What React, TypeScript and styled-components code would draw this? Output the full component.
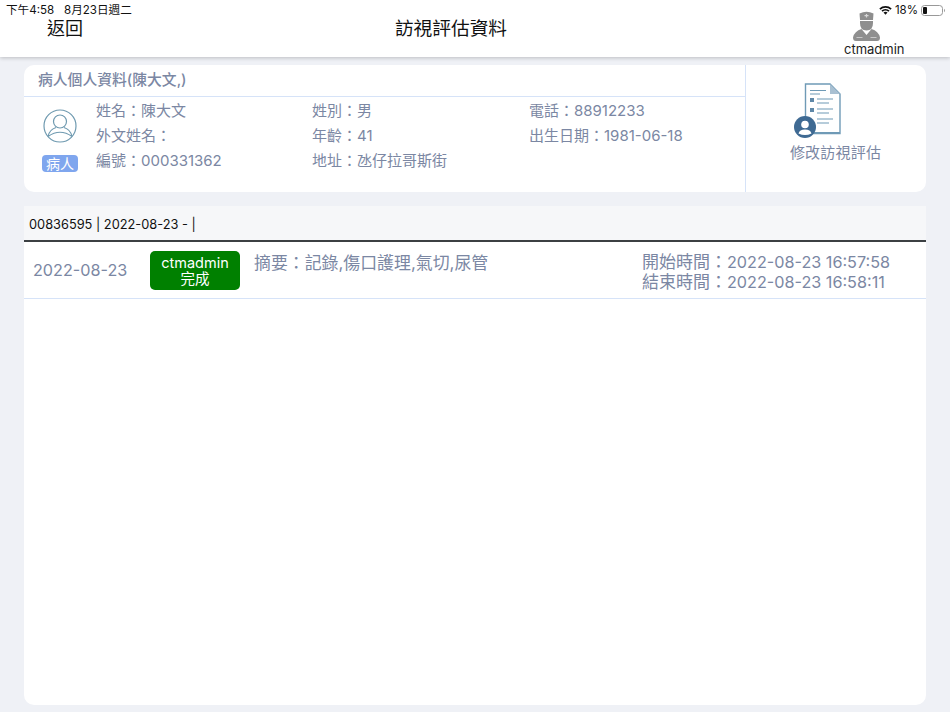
import styled, { createGlobalStyle } from "styled-components";

const GlobalStyle = createGlobalStyle`
    html, body {
        margin: 0;
        padding: 0;
        background-color: #eff1f6;
        font-family: Inter, "Noto Sans CJK TC", sans-serif;
    }
`;

const Page = styled.div`
    width: 950px;
    height: 712px;
    overflow: hidden;
    display: flex;
    flex-direction: column;
    background-color: #eff1f6;
`;

const Header = styled.header`
    position: relative;
    height: 57px;
    flex-shrink: 0;
    background-color: #fff;
    box-shadow: 0 1px 4px rgba(0, 0, 0, 0.22);
    display: grid;
    grid-template-columns: 47px 1fr 1fr 106px;
`;

const StatusLeft = styled.div`
    position: absolute;
    top: 3px;
    left: 6px;
    font-size: 11.6px;
    line-height: 14px;
    color: #111;
    white-space: pre;
`;

const StatusRight = styled.div`
    position: absolute;
    top: 3px;
    right: 5px;
    display: flex;
    align-items: center;
    gap: 3px;
    font-size: 11.5px;
    line-height: 14px;
    color: #111;
`;

const BackLink = styled.div`
    grid-column: 2;
    padding-top: 17px;
    font-size: 18px;
    line-height: 24px;
    color: #111;
`;

const Title = styled.h1`
    position: absolute;
    top: 17px;
    left: 0;
    width: 902px;
    margin: 0;
    text-align: center;
    font-size: 18.7px;
    font-weight: 400;
    line-height: 24px;
    color: #111;
`;

const UserBox = styled.div`
    grid-column: 4;
    padding-top: 11px;
    display: flex;
    flex-direction: column;
    align-items: flex-start;

    svg {
        margin-left: 9px;
    }
`;

const UserName = styled.div`
    margin-top: 1px;
    font-size: 13px;
    line-height: 15px;
    color: #222;
`;

const Content = styled.main`
    flex: 1;
    display: flex;
    flex-direction: column;
    gap: 14px;
    padding: 8px 24px 7px;
`;

const PatientCard = styled.section`
    height: 127px;
    flex-shrink: 0;
    display: flex;
    background-color: #fff;
    border-radius: 10px;
    overflow: hidden;
`;

const PatientMain = styled.div`
    flex: 1;
    display: flex;
    flex-direction: column;
`;

const CardTitle = styled.div`
    height: 31px;
    padding-left: 14px;
    border-bottom: 1px solid #d6e3f8;
    font-size: 14.8px;
    font-weight: 500;
    line-height: 30px;
    color: #7b87a3;
`;

const PatientBody = styled.div`
    flex: 1;
    display: flex;
`;

const AvatarColumn = styled.div`
    width: 72px;
    padding-top: 12px;
    display: flex;
    flex-direction: column;
    align-items: center;
`;

const RoleBadge = styled.span`
    width: 36px;
    height: 17px;
    margin-top: 12px;
    border-radius: 4px;
    background-color: #7fa6ee;
    color: #fff;
    font-size: 14px;
    line-height: 17px;
    text-align: center;
`;

const InfoGrid = styled.div`
    display: grid;
    grid-template-columns: 216px 217px 216px;
    grid-auto-rows: 25px;
    padding-top: 1px;
`;

const InfoCell = styled.div`
    font-size: 15px;
    line-height: 25px;
    color: #7b87a3;
    white-space: nowrap;
`;

const EditAction = styled.div`
    width: 181px;
    flex-shrink: 0;
    border-left: 1px solid #d6e3f8;
    padding-top: 18px;
    display: flex;
    flex-direction: column;
    align-items: center;

    svg {
        margin-right: 40px;
    }
`;

const EditLabel = styled.div`
    margin: 4px 2px 0 0;
    font-size: 15px;
    line-height: 20px;
    letter-spacing: 0.2px;
    color: #7b87a3;
`;

const VisitPanel = styled.section`
    flex: 1;
    display: flex;
    flex-direction: column;
    background-color: #fff;
    border-radius: 0 0 10px 10px;
`;

const VisitHeading = styled.div`
    height: 34px;
    padding-left: 5px;
    background-color: #f6f7f9;
    border-bottom: 2px solid #3c4043;
    font-size: 12.8px;
    line-height: 37px;
    color: #111;
`;

const VisitRow = styled.div`
    height: 56px;
    display: flex;
    border-bottom: 1px solid #d6e3f8;
`;

const VisitDate = styled.div`
    width: 126px;
    padding: 18px 0 0 9px;
    box-sizing: border-box;
    font-size: 16.2px;
    line-height: 20px;
    color: #7b87a3;
`;

const StatusBadge = styled.div`
    width: 90px;
    height: 39px;
    margin-top: 9px;
    border-radius: 5px;
    background-color: #008000;
    color: #fff;
    font-size: 14.5px;
    line-height: 16px;
    text-align: center;
    padding-top: 4px;
    box-sizing: border-box;
`;

const Summary = styled.div`
    width: 402px;
    padding: 10px 0 0 14px;
    box-sizing: border-box;
    font-size: 16.9px;
    line-height: 22px;
    color: #7b87a3;
`;

const Times = styled.div`
    padding-top: 10px;
    font-size: 17px;
    line-height: 20px;
    color: #7b87a3;
    white-space: nowrap;
`;

const TimeValue = styled.span`
    font-size: 16.2px;
`;

function WifiIcon() {
    return (
        <svg width="13" height="10" viewBox="0 0 13 10">
            <path d="M0.3 3.4 A9 9 0 0 1 12.7 3.4 L11.5 4.7 A7.2 7.2 0 0 0 1.5 4.7 Z" fill="#111" />
            <path d="M2.4 5.5 A6 6 0 0 1 10.6 5.5 L9.4 6.8 A4.2 4.2 0 0 0 3.6 6.8 Z" fill="#111" />
            <path d="M4.5 7.6 A3 3 0 0 1 8.5 7.6 L6.5 9.8 Z" fill="#111" />
        </svg>
    );
}

function BatteryIcon() {
    return (
        <svg width="24" height="11" viewBox="0 0 24 11">
            <rect x="0.5" y="0.5" width="21" height="10" rx="3" fill="none" stroke="#999" />
            <rect x="2" y="2" width="4" height="7" rx="1" fill="#111" />
            <path d="M23 3.8 A2 2 0 0 1 23 7.2 Z" fill="#999" />
        </svg>
    );
}

function NurseIcon() {
    return (
        <svg width="27" height="30" viewBox="0 0 27 30">
            <path d="M6.5 2.5 Q13.5 -0.8 20.5 2.5 L20 9 H7 Z" fill="#8e8e8e" />
            <path d="M11.5 4.7 h4 M13.5 3 v3.4" stroke="#d8d8d8" strokeWidth="1.2" />
            <path d="M7 10 H20 V12 Q20 19.5 13.5 19.5 Q7 19.5 7 12 Z" fill="#8f8f8f" />
            <path d="M8.5 18 L13.5 24 L18.5 18 Q25.5 20 27 26.5 Q27 30 24 30 H3 Q0 30 0 26.5 Q1.5 20 8.5 18 Z" fill="#8f8f8f" />
            <path d="M3.5 26.5 H9.5 M17.5 26.5 H23.5" stroke="#c8c8c8" strokeWidth="1.2" />
        </svg>
    );
}

function PersonCircleIcon() {
    return (
        <svg width="34" height="34" viewBox="0 0 34 34" fill="none" stroke="#6f9ab0" strokeWidth="1.2">
            <circle cx="17" cy="17" r="16" />
            <circle cx="17" cy="12.5" r="6.5" />
            <path d="M5 27.5 Q6.5 20.5 13 18.5 M29 27.5 Q27.5 20.5 21 18.5 M5 27.5 Q17 19 29 27.5" />
        </svg>
    );
}

function ReportIcon() {
    return (
        <svg width="48" height="56" viewBox="0 0 48 56">
            <path d="M12.5 1 H37 L47 11 V50.5 H12.5 Z" fill="#fff" stroke="#6f9ab6" strokeWidth="1.4" />
            <path d="M37 1 L47 11 H37 Z" fill="#a9c0d2" />
            <rect x="12.5" y="49" width="34.5" height="2" fill="#6f9ab6" />
            <path d="M17 7.5 H33 M17 11 H27 M24 16 H40 M24 20 H36 M24 26 H40 M24 30 H36 M24 36 H40 M24 40 H36" stroke="#6f9ab6" strokeWidth="1.2" />
            <rect x="17" y="15" width="4" height="4" fill="#5f88a8" />
            <rect x="17" y="25" width="4" height="4" fill="#5f88a8" />
            <circle cx="12" cy="44" r="11" fill="#3f6a93" />
            <circle cx="12" cy="41.5" r="3.8" fill="#fff" />
            <path d="M5.5 50.5 Q6.5 46.5 12 46.5 Q17.5 46.5 18.5 50.5 Q12 53.5 5.5 50.5 Z" fill="#fff" />
        </svg>
    );
}

const patientInfo = [
    "姓名：陳大文", "姓別：男", "電話：88912233",
    "外文姓名：", "年齡：41", "出生日期：1981-06-18",
    "編號：000331362", "地址：氹仔拉哥斯街",
];

export default function App() {
    return (
        <>
            <GlobalStyle />
            <Page>
                <Header>
                    <StatusLeft>{"下午4:58   8月23日週二"}</StatusLeft>
                    <BackLink>返回</BackLink>
                    <Title>訪視評估資料</Title>
                    <UserBox>
                        <NurseIcon />
                        <UserName>ctmadmin</UserName>
                    </UserBox>
                    <StatusRight>
                        <WifiIcon />
                        <span>18%</span>
                        <BatteryIcon />
                    </StatusRight>
                </Header>
                <Content>
                    <PatientCard>
                        <PatientMain>
                            <CardTitle>病人個人資料(陳大文,)</CardTitle>
                            <PatientBody>
                                <AvatarColumn>
                                    <PersonCircleIcon />
                                    <RoleBadge>病人</RoleBadge>
                                </AvatarColumn>
                                <InfoGrid>
                                    {patientInfo.map((entry) => (
                                        <InfoCell key={entry}>{entry}</InfoCell>
                                    ))}
                                </InfoGrid>
                            </PatientBody>
                        </PatientMain>
                        <EditAction>
                            <ReportIcon />
                            <EditLabel>修改訪視評估</EditLabel>
                        </EditAction>
                    </PatientCard>
                    <VisitPanel>
                        <VisitHeading>00836595 | 2022-08-23 - |</VisitHeading>
                        <VisitRow>
                            <VisitDate>2022-08-23</VisitDate>
                            <StatusBadge>ctmadmin<br />完成</StatusBadge>
                            <Summary>摘要：記錄,傷口護理,氣切,尿管</Summary>
                            <Times>
                                開始時間：<TimeValue>2022-08-23 16:57:58</TimeValue><br />
                                結束時間：<TimeValue>2022-08-23 16:58:11</TimeValue>
                            </Times>
                        </VisitRow>
                    </VisitPanel>
                </Content>
            </Page>
        </>
    );
}
